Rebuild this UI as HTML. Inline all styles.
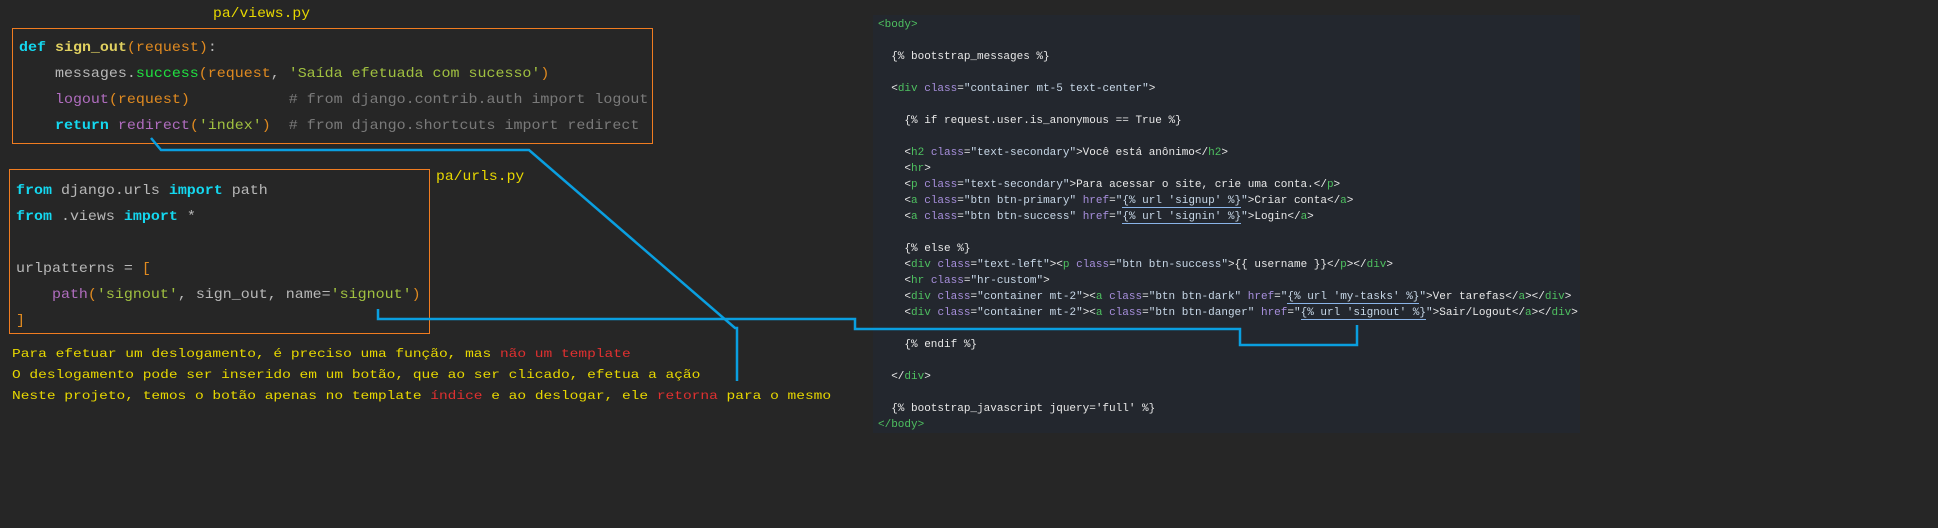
<!DOCTYPE html>
<html><head><meta charset="utf-8"><style>
body{margin:0;width:1938px;height:528px;background:#262626;position:relative;overflow:hidden;font-family:"Liberation Mono",monospace}
.abs{position:absolute;white-space:pre;transform-origin:0 0}
.code{font-size:14px;color:#b8b8b8;transform:scaleX(1.07)}
.k{color:#14d8f0;font-weight:bold}
.f{color:#e0d060;font-weight:bold}
.p{color:#e08a20}
.s{color:#a0c040}
.c{color:#7a7a7a}
.g{color:#20e040}
.m{color:#b06dbf}
.y{color:#e8d800}
.r{color:#e03030}
.note{font-size:12px;color:#e8d800;transform:scaleX(1.21)}
.ttl{font-size:14px;color:#e8d800;transform:scaleX(1.05)}
.box{position:absolute;border:1px solid #f07c20}
#panel{position:absolute;left:873px;top:15px;width:707px;height:418px;background:#23272e}
.h{font-size:11px;letter-spacing:0;color:#e8e8e8;line-height:16px}
.t{color:#4ec060}.a{color:#a78fdc}.v{color:#c8d8e8}.u{border-bottom:1px solid #8ab4e8}
</style></head><body>
<div class="abs ttl" style="left:213px;top:6px">pa/views.py</div>
<div class="box" style="left:12px;top:28px;width:639px;height:114px"></div>
<div class="abs code" style="left:19px;top:28px;line-height:26px;padding-top:7px"><span class="k">def</span> <span class="f">sign_out</span><span class="p">(request)</span>:
    messages.<span class="g">success</span><span class="p">(request</span>, <span class="s">'Saída efetuada com sucesso'</span><span class="p">)</span>
    <span class="m">logout</span><span class="p">(request)</span>           <span class="c"># from django.contrib.auth import logout</span>
    <span class="k">return</span> <span class="m">redirect</span><span class="p">(</span><span class="s">'index'</span><span class="p">)</span>  <span class="c"># from django.shortcuts import redirect</span></div>

<div class="abs ttl" style="left:436px;top:169px">pa/urls.py</div>
<div class="box" style="left:9px;top:169px;width:419px;height:163px"></div>
<div class="abs code" style="left:16px;top:171px;line-height:26px;padding-top:7px"><span class="k">from</span> django.urls <span class="k">import</span> path
<span class="k">from</span> .views <span class="k">import</span> *

urlpatterns = <span class="p">[</span>
    <span class="m">path</span><span class="p">(</span><span class="s">'signout'</span>, sign_out, name=<span class="s">'signout'</span><span class="p">)</span>
<span class="p">]</span></div>

<div class="abs note" style="left:12px;top:347px">Para efetuar um deslogamento, é preciso uma função, mas <span class="r">não um template</span></div>
<div class="abs note" style="left:12px;top:368px">O deslogamento pode ser inserido em um botão, que ao ser clicado, efetua a ação</div>
<div class="abs note" style="left:12px;top:389px">Neste projeto, temos o botão apenas no template <span class="r">índice</span> e ao deslogar, ele <span class="r">retorna</span> para o mesmo</div>

<div id="panel"></div>
<div class="abs h" style="left:878px;top:17px"><span class="t">&lt;body&gt;</span>

  {% bootstrap_messages %}

  &lt;<span class="t">div</span> <span class="a">class</span>=<span class="v">"container mt-5 text-center"</span>&gt;

    {% if request.user.is_anonymous == True %}

    &lt;<span class="t">h2</span> <span class="a">class</span>=<span class="v">"text-secondary"</span>&gt;Você está anônimo&lt;/<span class="t">h2</span>&gt;
    &lt;<span class="t">hr</span>&gt;
    &lt;<span class="t">p</span> <span class="a">class</span>=<span class="v">"text-secondary"</span>&gt;Para acessar o site, crie uma conta.&lt;/<span class="t">p</span>&gt;
    &lt;<span class="t">a</span> <span class="a">class</span>=<span class="v">"btn btn-primary"</span> <span class="a">href</span>=<span class="v">"<span class="u">{% url 'signup' %}</span>"</span>&gt;Criar conta&lt;/<span class="t">a</span>&gt;
    &lt;<span class="t">a</span> <span class="a">class</span>=<span class="v">"btn btn-success"</span> <span class="a">href</span>=<span class="v">"<span class="u">{% url 'signin' %}</span>"</span>&gt;Login&lt;/<span class="t">a</span>&gt;

    {% else %}
    &lt;<span class="t">div</span> <span class="a">class</span>=<span class="v">"text-left"</span>&gt;&lt;<span class="t">p</span> <span class="a">class</span>=<span class="v">"btn btn-success"</span>&gt;{{ username }}&lt;/<span class="t">p</span>&gt;&lt;/<span class="t">div</span>&gt;
    &lt;<span class="t">hr</span> <span class="a">class</span>=<span class="v">"hr-custom"</span>&gt;
    &lt;<span class="t">div</span> <span class="a">class</span>=<span class="v">"container mt-2"</span>&gt;&lt;<span class="t">a</span> <span class="a">class</span>=<span class="v">"btn btn-dark"</span> <span class="a">href</span>=<span class="v">"<span class="u">{% url 'my-tasks' %}</span>"</span>&gt;Ver tarefas&lt;/<span class="t">a</span>&gt;&lt;/<span class="t">div</span>&gt;
    &lt;<span class="t">div</span> <span class="a">class</span>=<span class="v">"container mt-2"</span>&gt;&lt;<span class="t">a</span> <span class="a">class</span>=<span class="v">"btn btn-danger"</span> <span class="a">href</span>=<span class="v">"<span class="u">{% url 'signout' %}</span>"</span>&gt;Sair/Logout&lt;/<span class="t">a</span>&gt;&lt;/<span class="t">div</span>&gt;

    {% endif %}

  &lt;/<span class="t">div</span>&gt;

  {% bootstrap_javascript jquery='full' %}
<span class="t">&lt;/body&gt;</span></div>

<svg class="abs" style="left:0;top:0" width="1938" height="528">
<g fill="none" stroke="#0a9fe0" stroke-width="2.5">
<polyline points="151,138 161,150 529,150 735,328 737,328 737,381"/>
<polyline points="378,309 378,319 855,319 855,329 1240,329 1240,345 1357,345 1357,325"/>
</g>
</svg>
</body></html>
